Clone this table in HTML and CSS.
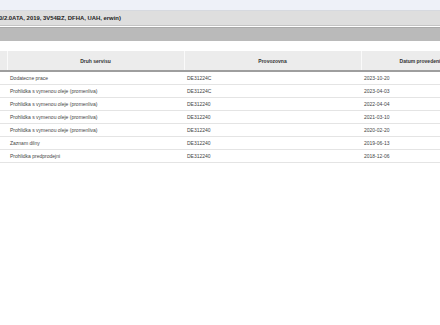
FILE: index.html
```html
<!DOCTYPE html>
<html>
<head>
<meta charset="utf-8">
<link rel="stylesheet" href="styles.css">
</head>
<body>
<div class="page">
  <div class="topband"></div>
  <div class="titlebar"><span class="title">0/2.0ATA, 2019, 3V54BZ, DFHA, UAH, erwin)</span></div>
  <div class="toolbar"></div>
  <div class="tablewrap">
    <table class="grid">
      <colgroup>
        <col class="c0"><col class="c1"><col class="c2"><col class="c3"><col class="c4">
      </colgroup>
      <thead>
        <tr><th></th><th>Druh servisu</th><th>Provozovna</th><th>Datum provedeni</th><th></th></tr>
      </thead>
      <tbody>
        <tr><td></td><td>Dodatecne prace</td><td>DE31224C</td><td>2023-10-20</td><td></td></tr>
        <tr><td></td><td>Prohlidka s vymenou oleje (promenliva)</td><td>DE31224C</td><td>2023-04-03</td><td></td></tr>
        <tr><td></td><td>Prohlidka s vymenou oleje (promenliva)</td><td>DE312240</td><td>2022-04-04</td><td></td></tr>
        <tr><td></td><td>Prohlidka s vymenou oleje (promenliva)</td><td>DE312240</td><td>2021-03-10</td><td></td></tr>
        <tr><td></td><td>Prohlidka s vymenou oleje (promenliva)</td><td>DE312240</td><td>2020-02-20</td><td></td></tr>
        <tr><td></td><td>Zaznam dilny</td><td>DE312240</td><td>2019-06-13</td><td></td></tr>
        <tr><td></td><td>Prohlidka predprodejni</td><td>DE312240</td><td>2018-12-06</td><td></td></tr>
      </tbody>
    </table>
  </div>
</div>
</body>
</html>
```

FILE: styles.css
```css
html, body {
  margin: 0;
  padding: 0;
  background: #ffffff;
  overflow: hidden;
}
body {
  width: 440px;
  height: 325px;
  font-family: "Liberation Sans", Arial, sans-serif;
  color: #333333;
}
.page {
  display: flex;
  flex-direction: column;
  width: 440px;
}
.topband {
  height: 10px;
  background: #eef1f8;
  border-bottom: 1px solid #d6d9df;
}
.titlebar {
  height: 14px;
  background: #dedede;
  border-bottom: 1px solid #c4c4c4;
  display: flex;
  align-items: center;
  white-space: nowrap;
  overflow: hidden;
}
.title {
  font-size: 5.9px;
  font-weight: bold;
  color: #222222;
  margin-left: -1px;
}
.toolbar {
  height: 13px;
  margin-top: 1px;
  background: #bababa;
  border-top: 1px solid #a9a9a9;
}
.tablewrap {
  padding-top: 10px;
  overflow: hidden;
  width: 440px;
}
.grid {
  border-collapse: collapse;
  table-layout: fixed;
  width: 650px;
  font-size: 5px;
}
.c0 { width: 7px; }
.c1 { width: 177px; }
.c2 { width: 177px; }
.c3 { width: 118px; }
.c4 { width: 171px; }
.grid th {
  height: 19px;
  background: #ececec;
  font-weight: bold;
  color: #333333;
  text-align: center;
  padding: 0;
  border-left: 1px solid #fafafa;
  border-bottom: 2px solid #9e9e9e;
  white-space: nowrap;
  overflow: hidden;
}
.grid th:first-child {
  border-left: none;
}
.grid td {
  height: 12px;
  padding: 0 0 0 3px;
  border-bottom: 1px solid #e4e4e4;
  color: #444444;
  white-space: nowrap;
  overflow: hidden;
}
.grid td:first-child {
  padding: 0;
}
```
